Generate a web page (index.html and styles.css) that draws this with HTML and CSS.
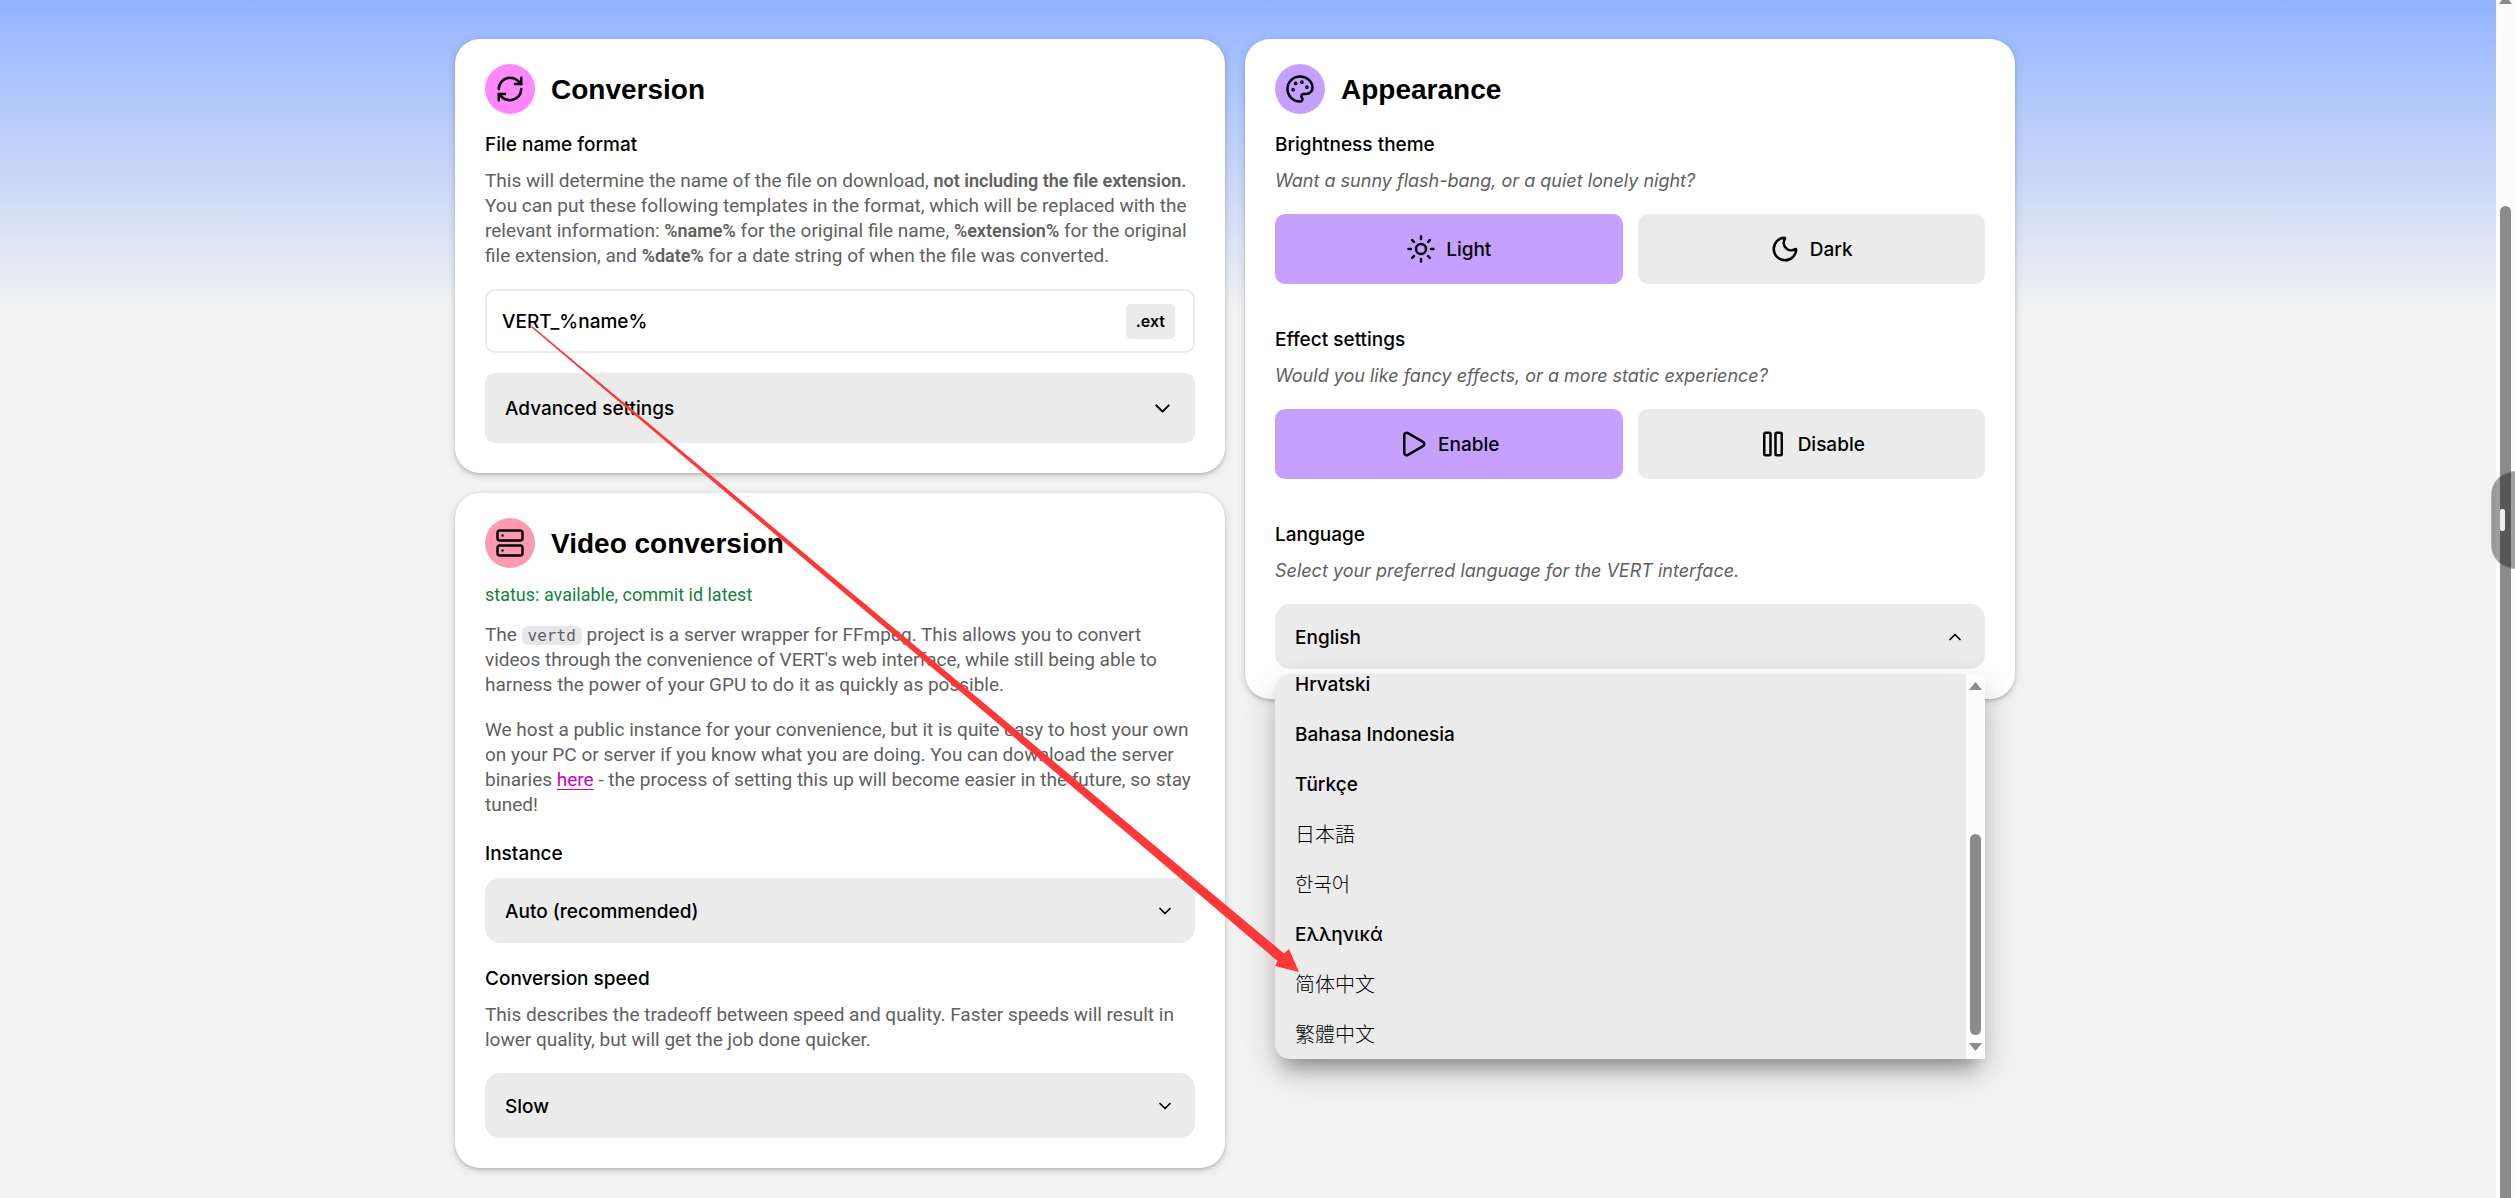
FILE: index.html
```html
<!DOCTYPE html>
<html lang="en">
<head>
<meta charset="utf-8">
<meta name="viewport" content="width=device-width, initial-scale=1">
<title>VERT – Settings</title>
<link rel="stylesheet" href="styles.css">
</head>
<body>
<div class="page">
  <main class="settings">
    <div class="column">
      <section class="card">
        <h2 class="card-title">
          <span class="badge badge-pink">
            <svg class="icon" viewBox="0 0 24 24" aria-hidden="true"><path d="M3 12a9 9 0 0 1 9-9 9.75 9.75 0 0 1 6.74 2.74L21 8"/><path d="M21 3v5h-5"/><path d="M21 12a9 9 0 0 1-9 9 9.75 9.75 0 0 1-6.74-2.74L3 16"/><path d="M8 16H3v5"/></svg>
          </span>
          Conversion
        </h2>
        <div class="field">
          <label class="label" for="format">File name format</label>
          <p class="text">This will determine the name of the file on download, <b>not including the file extension.</b> You can put these following templates in the format, which will be replaced with the relevant information: <b>%name%</b> for the original file name, <b>%extension%</b> for the original file extension, and <b>%date%</b> for a date string of when the file was converted.</p>
          <div class="name-box">
            <input class="name-input" id="format" type="text" value="VERT_%name%">
            <span class="ext">.ext</span>
          </div>
        </div>
        <button class="button advanced" type="button">
          Advanced settings
          <svg class="icon icon-md" viewBox="0 0 24 24" aria-hidden="true"><path d="m6 9 6 6 6-6"/></svg>
        </button>
      </section>

      <section class="card">
        <h2 class="card-title">
          <span class="badge badge-red">
            <svg class="icon" viewBox="0 0 24 24" aria-hidden="true"><rect width="20" height="8" x="2" y="2" rx="2"/><rect width="20" height="8" x="2" y="14" rx="2"/><path d="M6 6h.01M6 18h.01"/></svg>
          </span>
          Video conversion
        </h2>
        <p class="status">status: available, commit id latest</p>
        <div class="about">
          <p class="text">The <code class="code">vertd</code> project is a server wrapper for FFmpeg. This allows you to convert videos through the convenience of VERT's web interface, while still being able to harness the power of your GPU to do it as quickly as possible.</p>
          <p class="text">We host a public instance for your convenience, but it is quite easy to host your own on your PC or server if you know what you are doing. You can download the server binaries <a class="link" href="#">here</a> - the process of setting this up will become easier in the future, so stay tuned!</p>
        </div>
        <div class="field field-plain">
          <label class="label" for="instance">Instance</label>
          <div class="select-box">
            <select class="select" id="instance"><option>Auto (recommended)</option></select>
            <svg class="icon icon-sm" viewBox="0 0 24 24" aria-hidden="true"><path d="m6 9 6 6 6-6"/></svg>
          </div>
        </div>
        <div class="field field-speed">
          <label class="label" for="speed">Conversion speed</label>
          <p class="text">This describes the tradeoff between speed and quality. Faster speeds will result in lower quality, but will get the job done quicker.</p>
          <div class="select-box">
            <select class="select" id="speed"><option>Slow</option></select>
            <svg class="icon icon-sm" viewBox="0 0 24 24" aria-hidden="true"><path d="m6 9 6 6 6-6"/></svg>
          </div>
        </div>
      </section>
    </div>

    <div class="column">
      <section class="card">
        <h2 class="card-title">
          <span class="badge badge-purple">
            <svg class="icon" viewBox="0 0 24 24" aria-hidden="true"><path d="M12 22a1 1 0 0 1 0-20 10 9 0 0 1 10 9 5 5 0 0 1-5 5h-2.25a1.75 1.75 0 0 0-1.4 2.8l.3.4a1.75 1.75 0 0 1-1.4 2.8z"/><circle class="dot" cx="13.5" cy="6.5" r=".5"/><circle class="dot" cx="17.5" cy="10.5" r=".5"/><circle class="dot" cx="6.5" cy="12.5" r=".5"/><circle class="dot" cx="8.5" cy="7.5" r=".5"/></svg>
          </span>
          Appearance
        </h2>
        <div class="groups">
          <div class="field">
            <h3 class="label">Brightness theme</h3>
            <p class="text hint">Want a sunny flash-bang, or a quiet lonely night?</p>
            <div class="choices">
              <button class="button selected" type="button">
                <svg class="icon" viewBox="0 0 24 24" aria-hidden="true"><circle cx="12" cy="12" r="4"/><path d="M12 2v2M12 20v2M4.93 4.93l1.41 1.41M17.66 17.66l1.41 1.41M2 12h2M20 12h2M6.34 17.66l-1.41 1.41M19.07 4.93l-1.41 1.41"/></svg>
                Light
              </button>
              <button class="button" type="button">
                <svg class="icon" viewBox="0 0 24 24" aria-hidden="true"><path d="M20.985 12.486a9 9 0 1 1-9.473-9.472c.405-.022.617.46.402.803a6 6 0 0 0 8.268 8.268c.344-.215.825-.004.803.401"/></svg>
                Dark
              </button>
            </div>
          </div>
          <div class="field">
            <h3 class="label">Effect settings</h3>
            <p class="text hint">Would you like fancy effects, or a more static experience?</p>
            <div class="choices">
              <button class="button selected" type="button">
                <svg class="icon" viewBox="0 0 24 24" aria-hidden="true"><path d="M5 5a2 2 0 0 1 3.008-1.728l11.997 6.998a2 2 0 0 1 .003 3.458l-12 7A2 2 0 0 1 5 19z"/></svg>
                Enable
              </button>
              <button class="button" type="button">
                <svg class="icon" viewBox="0 0 24 24" aria-hidden="true"><rect x="14" y="3" width="5" height="18" rx="1"/><rect x="5" y="3" width="5" height="18" rx="1"/></svg>
                Disable
              </button>
            </div>
          </div>
          <div class="field">
            <label class="label" for="language">Language</label>
            <p class="text hint">Select your preferred language for the VERT interface.</p>
            <div class="select-box">
              <select class="select" id="language"><option>English</option></select>
              <svg class="icon icon-sm" viewBox="0 0 24 24" aria-hidden="true"><path d="m18 15-6-6-6 6"/></svg>
              <div class="menu">
                <ul class="menu-list" role="listbox" aria-label="Language">
                  <li class="menu-item" role="option">Hrvatski</li>
                  <li class="menu-item" role="option">Bahasa Indonesia</li>
                  <li class="menu-item" role="option">Türkçe</li>
                  <li class="menu-item cjk cjk-jp" role="option" lang="ja">日本語</li>
                  <li class="menu-item cjk cjk-kr" role="option" lang="ko">한국어</li>
                  <li class="menu-item" role="option" lang="el">Ελληνικά</li>
                  <li class="menu-item cjk cjk-sc" role="option" lang="zh-Hans">简体中文</li>
                  <li class="menu-item cjk cjk-tc" role="option" lang="zh-Hant">繁體中文</li>
                </ul>
                <div class="menu-bar">
                  <svg class="tri" viewBox="0 0 13 8" aria-hidden="true"><path d="M6.5 0 13 8H0z"/></svg>
                  <span class="menu-thumb"></span>
                  <svg class="tri" viewBox="0 0 13 8" aria-hidden="true"><path d="M6.5 8 13 0H0z"/></svg>
                </div>
              </div>
            </div>
          </div>
        </div>
      </section>
    </div>
  </main>
  <div class="scrollbar" aria-hidden="true">
    <svg class="tri tri-top" viewBox="0 0 13 4"><path d="M3 0h7l3 4H0z"/></svg>
    <span class="scroll-thumb"></span>
  </div>
</div>
<div class="side-tab" aria-hidden="true"><span class="side-grip"></span></div>
<svg class="pointer" viewBox="0 0 768 646" aria-hidden="true"><path d="M0 1 1 0 753 627.500 758 623 768 646 744 640 746.500 635z"/></svg>
</body>
</html>
```
FILE: styles.css
```css
:root {
  --ink: #000;
  --muted: #606060;
  --grey: #ebebeb;
  --purple: #c5a0ff;
  --pink: #ff87fc;
  --red: #ff9aae;
}

* { box-sizing: border-box; margin: 0; }

body {
  position: relative;
  background: #f2f2f2;
  color: var(--ink);
  font: 500 19px/30px Inter, "Liberation Sans", sans-serif;
  overflow-x: hidden;
}

.page {
  display: flex;
  min-height: 100vh;
  background: linear-gradient(#92b4ff, #f2f2f2 310px);
}

.settings {
  flex: 1;
  display: grid;
  grid-template-columns: repeat(2, minmax(0, 770px));
  justify-content: center;
  align-items: start;
  gap: 20px;
  padding: 39px 26px 30px 0;
}

.column {
  display: flex;
  flex-direction: column;
  gap: 20px;
}

.card {
  padding: 25px 30px 30px;
  border-radius: 25px;
  background: #fff;
  box-shadow: 0 2px 3px rgba(0, 0, 0, .14), 0 2px 8px rgba(0, 0, 0, .14);
}

.card-title {
  display: flex;
  gap: 16px;
  height: 50px;
  font: 700 28px/52px "Liberation Sans", Arial, sans-serif;
}

.badge {
  display: grid;
  place-items: center;
  width: 50px;
  height: 50px;
  border-radius: 50%;
}
.badge-pink { background: var(--pink); }
.badge-red { background: var(--red); }
.badge-purple { background: var(--purple); }

.icon {
  flex: none;
  width: 30px;
  height: 30px;
  fill: none;
  stroke: currentColor;
  stroke-width: 2;
  stroke-linecap: round;
  stroke-linejoin: round;
}
.icon-md { width: 25px; height: 25px; }
.icon-sm { width: 20px; height: 20px; }
.dot { fill: currentColor; }

.field {
  display: flex;
  flex-direction: column;
  gap: 8px;
  padding-top: 16px;
}
.field-plain { gap: 9px; padding-top: 22px; }
.field-speed { padding-top: 21px; }
.field .text { margin-bottom: 13px; }

.label { font: inherit; font-weight: 500; }

.text {
  color: var(--muted);
  font: 400 19px/25px Roboto, "Liberation Sans", sans-serif;
}
.text b { font-size: 18px; font-weight: 600; line-height: 20px; }
.text.hint { font: italic 400 18px/25px Inter, "Liberation Sans", sans-serif; }

.status {
  padding-top: 14px;
  color: #15803d;
  font: 400 18px/25px Roboto, "Liberation Sans", sans-serif;
}

.about {
  display: flex;
  flex-direction: column;
  gap: 20px;
  padding: 15px 4px 0 0;
}

.code {
  padding: 0 6px;
  border-radius: 6px;
  background: #e5e7eb;
  font: 16px/20px "DejaVu Sans Mono", monospace;
}

.link { color: #cc00c8; text-decoration: underline; text-underline-offset: 3px; }

.name-box {
  display: flex;
  align-items: center;
  height: 64px;
  padding: 0 18px 0 15px;
  border: 2px solid var(--grey);
  border-radius: 10px;
}
.name-input {
  flex: 1;
  min-width: 0;
  padding: 2px 0 0;
  border: 0;
  outline: 0;
  background: none;
  color: inherit;
  font: inherit;
}
.ext {
  padding: 0 10px;
  border-radius: 5px;
  background: var(--grey);
  font-size: 16px;
  font-weight: 600;
  line-height: 35px;
}

.button {
  display: flex;
  align-items: center;
  justify-content: center;
  gap: 10px;
  height: 70px;
  padding: 2px 20px 0;
  border: 0;
  border-radius: 10px;
  background: var(--grey);
  color: inherit;
  font: inherit;
}
.button .icon { margin-bottom: 2px; }
.selected { background: var(--purple); }
.advanced {
  justify-content: space-between;
  width: 100%;
  margin-top: 20px;
}

.choices {
  display: grid;
  grid-template-columns: 1fr 1fr;
  gap: 15px;
}

.groups {
  display: flex;
  flex-direction: column;
  gap: 25px;
}

.select-box {
  position: relative;
  display: grid;
  align-items: center;
}
.select-box > .select,
.select-box > .icon { grid-area: 1 / 1; }
.select-box > .icon {
  justify-self: end;
  margin-right: 20px;
  pointer-events: none;
}
.select {
  appearance: none;
  width: 100%;
  height: 65px;
  padding: 3px 20px 0;
  border: 0;
  border-radius: 15px;
  background: var(--grey);
  color: inherit;
  font: inherit;
}

.menu {
  position: absolute;
  top: calc(100% + 5px);
  left: 0;
  right: 0;
  display: flex;
  height: 385px;
  border-radius: 15px 0 0 15px;
  background: var(--grey);
  box-shadow: 0 16px 20px -8px rgba(0, 0, 0, .34), 0 12px 36px rgba(0, 0, 0, .16);
}
.menu-list {
  flex: 1;
  display: flex;
  flex-direction: column;
  justify-content: flex-end;
  padding: 0;
  overflow: hidden;
  list-style: none;
}
.menu-item {
  flex: none;
  height: 50px;
  padding: 0 20px;
  line-height: 52px;
}
.cjk { font-size: 20px; font-weight: 300; line-height: 50px; }
.cjk-jp { font-family: "Noto Sans CJK JP", sans-serif; }
.cjk-kr { font-family: "Noto Sans CJK KR", sans-serif; }
.cjk-sc { font-family: "Noto Sans CJK SC", sans-serif; }
.cjk-tc { font-family: "Noto Sans CJK TC", sans-serif; }

.menu-bar {
  display: flex;
  flex-direction: column;
  align-items: center;
  width: 19px;
  padding: 8px 0;
  background: #fcfcfc;
}
.menu-thumb {
  width: 11px;
  height: 201px;
  margin: auto 0 8px;
  border-radius: 6px;
  background: #8b8b8b;
}
.tri { width: 13px; height: 8px; fill: #8b8b8b; }
.tri-top { height: 4px; }

.scrollbar {
  display: flex;
  flex-direction: column;
  align-items: center;
  width: 19px;
  background: #fcfcfc;
}
.scroll-thumb {
  flex: 1;
  width: 11px;
  margin-top: 202px;
  border-radius: 6px 6px 0 0;
  background: #8b8b8b;
}

.side-tab {
  position: absolute;
  top: 471px;
  right: 0;
  display: flex;
  align-items: center;
  width: 24px;
  height: 98px;
  padding-left: 8px;
  border: 1px solid rgba(255, 255, 255, .2);
  border-right: 0;
  border-radius: 24px 0 0 24px;
  background: rgba(0, 0, 0, .37);
}
.side-grip {
  width: 5px;
  height: 22px;
  border-radius: 2px;
  background: #f0f0f0;
}

.pointer {
  position: absolute;
  top: 326px;
  left: 531px;
  width: 768px;
  height: 646px;
  fill: #fe3838;
  pointer-events: none;
}
```
